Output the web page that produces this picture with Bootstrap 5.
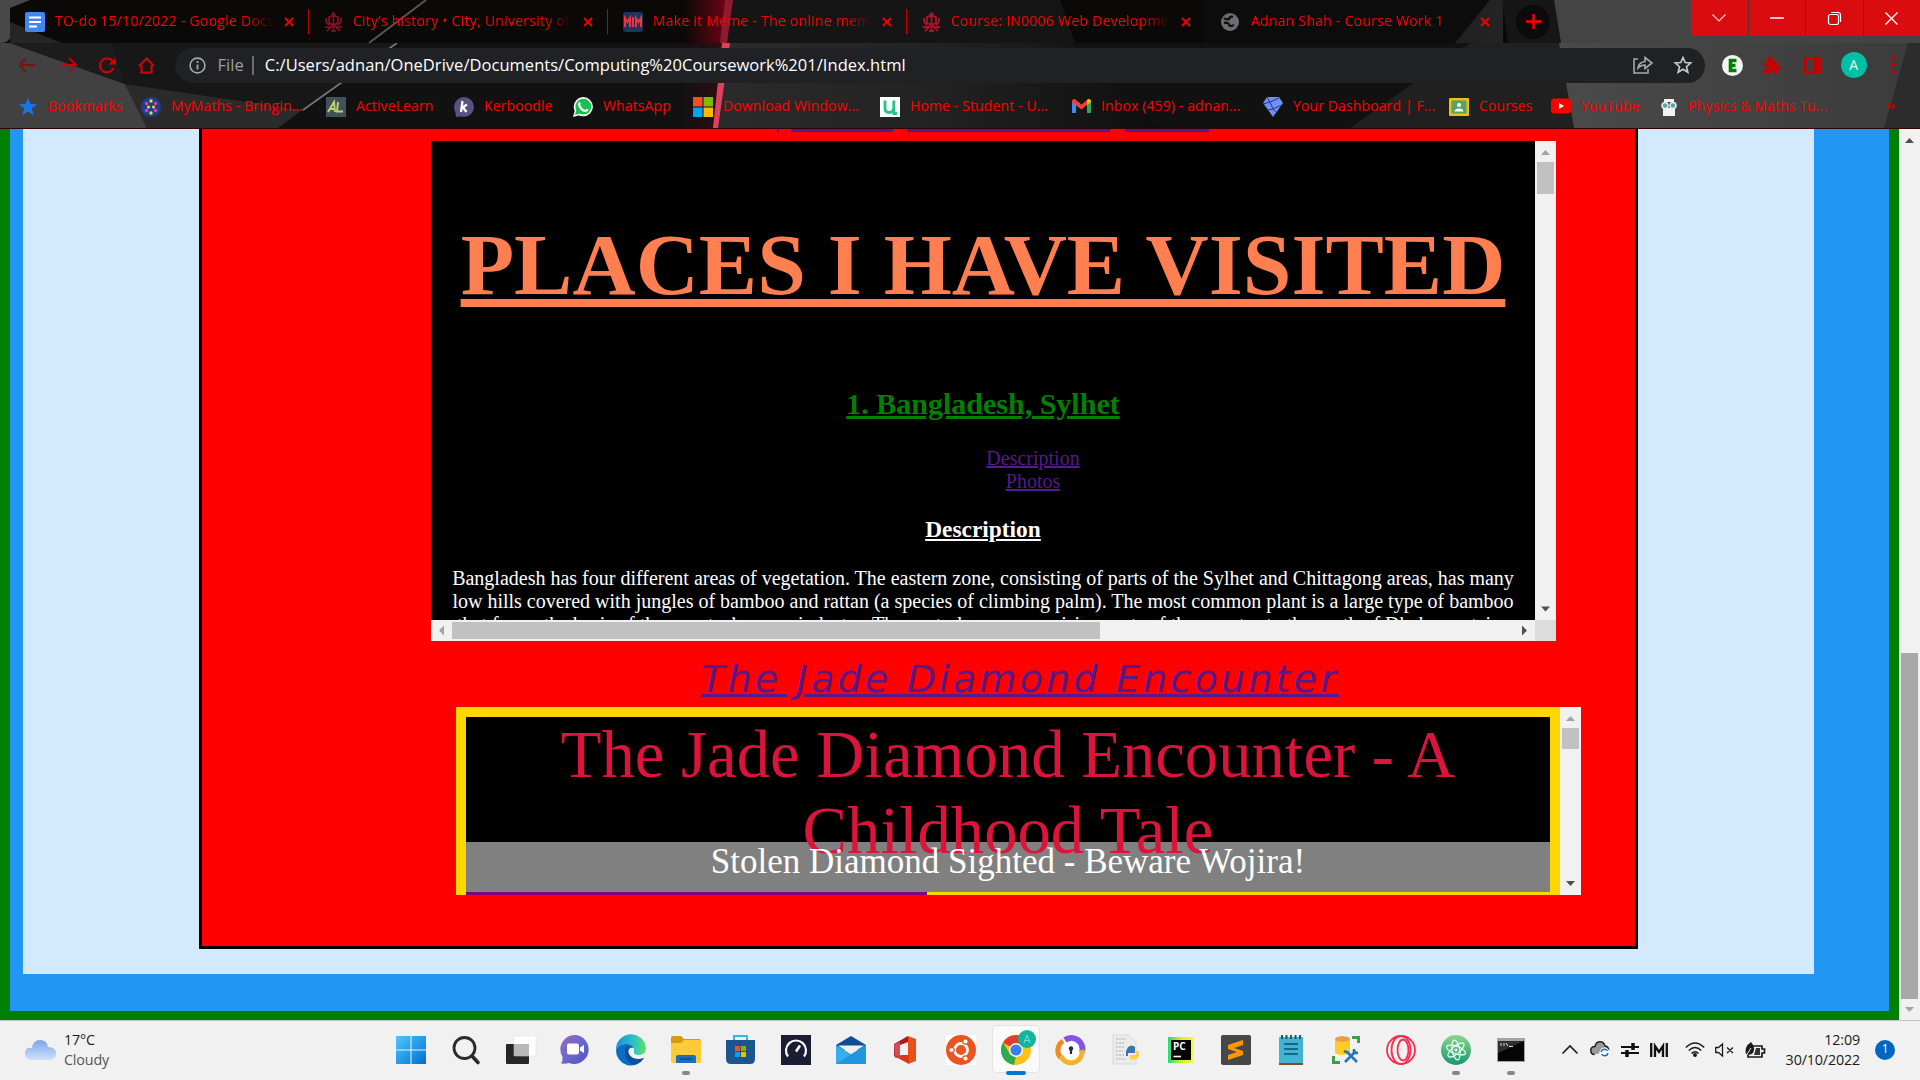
<!DOCTYPE html>
<html lang="en">
<head>
<meta charset="utf-8">
<meta name="viewport" content="width=device-width, initial-scale=1">
<title>Adnan Shah - Course Work 1</title>
<link href="https://cdn.jsdelivr.net/npm/bootstrap@5.3.0/dist/css/bootstrap.min.css" rel="stylesheet">
<style>
body{width:1920px;height:1080px;overflow:hidden;font-family:"Open Sans","Noto Sans",sans-serif;color:#000;line-height:1.2}
svg{display:block;flex:none;overflow:visible}
/* browser chrome */
.chrome{height:129px;border-bottom:1px solid #300;background:#0d0d0d;color:red;font-size:14px;flex:none}
.theme-art{position:absolute;left:0;top:0}
.tabs{height:43px;padding-left:10px}
.tab{width:299px;height:42px;padding-left:15px;padding-right:15px;letter-spacing:.25px}
.tab-name{width:219px;margin-left:10px;white-space:nowrap;overflow:hidden;-webkit-mask-image:linear-gradient(90deg,#000 88%,transparent 100%)}
.tab .tab-x{margin-left:auto}
.tab-sep{width:1px;height:25px;background:#c00000;margin-left:-1px}
.tab-new{width:34px;height:34px;border-radius:50%;background:#0c0a0a;margin-left:11px}
.win{width:229px;height:36px;gap:1px;background:#54302f}
.win>div{background:#db0c10;flex:1}
.toolbar{height:43px;padding-left:17px;padding-top:1px}
.tool{width:40.4px}
.omni{width:1530px;height:35px;border-radius:18px;background:#202124;margin-left:-4px;padding:0 13px 0 14px;font-size:16.5px;letter-spacing:.03px}
.omni .scheme{color:#9aa0a6;margin:0 6px 0 12px}
.omni .bar{width:2px;height:19px;background:#6a6d72;margin:0 11px 0 2px}
.url{color:#fff}
.ext{margin-left:17px;gap:20px}
.avatar{width:26px;height:26px;border-radius:50%;background:#00bfa5;color:#e6fffb;font-size:14px}
.marks{height:41px;letter-spacing:.12px}
.mk{white-space:nowrap;flex:none}
.mk span{margin-left:10px}
/* page */
.view{height:891px;background:#f1f1f1;flex:none}
.page{width:1899px;border:solid green;border-width:0 10px 9px;background:#2196f3;padding:0 75px 37px 13px}
.pale{background:#d3e9fd;padding:0 176px 25px;height:845px}
.redbox{background:red;border:3px solid #000;border-top:0;height:820px;font-family:"Liberation Serif",serif}
.cut-links{height:12px;padding-left:575px}
.cut-links i{height:3px;background:#551a8b}
.frame-a{width:1125px;height:500px;margin-left:229px;background:#000;color:#fff}
.pane-a{width:1104px;height:479px;overflow:hidden;padding-top:75px;text-align:center}
.pane-a h1{font-size:87.5px;line-height:98px;font-weight:700;color:coral;text-decoration:underline;margin:0;white-space:nowrap}
.pane-a h2{font-size:30px;line-height:34px;font-weight:700;color:green;text-decoration:underline;margin:73px 0 26px}
.pane-a ul{padding:0 0 0 100px;margin:0;font-size:20px;line-height:23px;list-style:none}
.visited{color:#551a8b;text-decoration:underline}
.pane-a h3{font-size:23.4px;line-height:27px;font-weight:700;text-decoration:underline;margin:23px 0 24px}
.pane-a p{font-size:20px;line-height:23px;margin:0;white-space:nowrap}
.sb-v{width:21px;background:#f1f1f1}
.sb-h{height:21px;background:#f1f1f1;width:1104px}
.arr{width:21px;height:21px;flex:none}
.thumb{background:#c1c1c1}
.sb-v .thumb{width:17px;margin:0 2px}
.sb-h .thumb{height:17px;width:648px}
.t1{height:32px}.t2{height:21px}
.t3{height:346px;margin-top:auto!important;background:#a8a8a8}
.tale-link{height:66px;padding-left:203px;font-family:"DejaVu Sans",sans-serif;font-style:italic;font-size:38px;line-height:76px;letter-spacing:3.2px;text-align:center;white-space:nowrap}
.frame-b{width:1125px;height:188px;margin-left:254px}
.pane-b{width:1104px;height:188px;background:gold;border:solid gold;border-width:10px 10px 0;text-align:center}
.tale-title{height:125px;background:#000;color:crimson;font-size:66.7px;line-height:76px}
.news{height:50px;background:gray;color:#fff;font-size:35px;line-height:40px}
.news-line{height:3px;width:461px;background:purple}
/* taskbar */
.taskbar{height:60px;background:#f1f1f1;border-top:1px solid #c4c4c4;color:#1b1b1b;font-size:14.3px;letter-spacing:-.15px;padding-bottom:2px;flex:none}
.weather{width:383px;padding-left:25px;line-height:20px;gap:8px}
.weather .sky{color:#555}
.app{width:55px;height:59px;flex:none;position:relative}
.app.run::after{content:"";position:absolute;bottom:4px;width:8px;height:4px;border-radius:2px;background:#868686}
.app.on::before{content:"";position:absolute;left:4px;top:5px;width:48px;height:48px;border-radius:5px;background:#fafafa;border:1px solid #e3e3e3}
.app.on svg{position:relative}
.app.on::after{content:"";position:absolute;bottom:4px;width:20px;height:4px;border-radius:2px;background:#0078d4}
.tray{margin-left:24px}
.clock{width:95px;line-height:20px;text-align:right}
.count{width:20px;height:20px;border-radius:50%;background:#0067c0;color:#fff;font-size:12px;margin-left:15px}
</style>
<script src="https://cdn.jsdelivr.net/npm/bootstrap@5.3.0/dist/js/bootstrap.bundle.min.js"></script>
</head>
<body class="d-flex flex-column m-0">

<header class="chrome position-relative">
  <svg class="theme-art" width="1920" height="128" viewBox="0 0 1920 128">
    <defs>
      <linearGradient id="g1"><stop offset="0" stop-color="#2b2b2b"/><stop offset=".5" stop-color="#222"/><stop offset="1" stop-color="#0e0e0e"/></linearGradient>
      <linearGradient id="g2"><stop offset="0" stop-color="#900018" stop-opacity="0"/><stop offset="1" stop-color="#a0001c" stop-opacity=".7"/></linearGradient>
      <linearGradient id="g3"><stop offset="0" stop-color="#4a4a4a"/><stop offset="1" stop-color="#3b3b3b"/></linearGradient>
      <linearGradient id="g4"><stop offset="0" stop-color="#0a0a0a"/><stop offset="1" stop-color="#242424"/></linearGradient>
    </defs>
    <rect width="1920" height="128" fill="#111"/>
    <path d="M0 43H10L125 84L147 128H0Z" fill="#414141"/>
    <path d="M10 43H112L125 84Z" fill="#1c1c1c"/>
    <path d="M112 43H398L302 110L125 84Z" fill="#171717"/>
    <path d="M125 84L302 110L278 128H147Z" fill="#2b2b2b"/>
    <path d="M397 43L303 110" stroke="#777" stroke-width="1.6"/>
    <rect x="680" y="43" width="44" height="85" fill="url(#g2)" opacity=".3"/>
    <path d="M728 43H1070L1160 128H716Z" fill="url(#g1)"/>
    <path d="M722 43H730L718 128H713Z" fill="#e0405c"/>
    <path d="M1470 43L1350 128H1580V43Z" fill="#202020"/>
    <path d="M1559 43H1920V128H1574Z" fill="url(#g3)"/>
    <path d="M1908 43L1884 128H1920V43Z" fill="#2c2c2c"/>
    <rect width="1920" height="43" fill="#0a0908"/>
    <path d="M0 0H30L10 8V38Q8 43 0 43Z" fill="#484848"/>
    <path d="M10 22L62 43H10Z" fill="#252525"/>
    <path d="M426 0L369 43" stroke="#555" stroke-width="2"/>
    <rect x="684" width="44" height="43" fill="url(#g2)"/>
    <path d="M732 0H1060L1075 43H727Z" fill="#151515"/>
    <path d="M725 0H733L727 43H720Z" fill="#8f1a30"/>
    <path d="M1200 0H1503V43H1205Z" fill="url(#g4)"/>
    <path d="M1205 0H1490L1455 43H1205Z" fill="#0c0c0c"/>
    <path d="M1502 0H1554L1561 43H1508Z" fill="#161616"/>
    <path d="M1554 0H1920V43H1561Z" fill="#444"/>
  </svg>
  <div class="position-relative">
    <nav class="tabs d-flex align-items-center">
      <div class="tab d-flex align-items-center">
        <svg width="20" height="20" viewBox="0 0 20 20"><rect width="20" height="20" rx="2" fill="#4285f4"/><path d="M4 5.500H16M4 10H16M4 14.500H12" stroke="#fff" stroke-width="2"/></svg>
        <span class="tab-name">TO-do 15/10/2022 - Google Docs</span>
        <svg class="tab-x" width="10" height="10" viewBox="0 0 10 10"><path d="M1 1L9 9M9 1L1 9" stroke="#f00000" stroke-width="2"/></svg>
      </div>
      <span class="tab-sep"></span>
      <div class="tab d-flex align-items-center">
        <svg width="19" height="20" viewBox="0 0 19 20" fill="none" stroke="#8f1020" stroke-width="1.6"><path d="M9.500 0V5M7 2.500H12M5 5Q9.500 3 14 5V11Q9.500 14 5 11ZM9.500 5V18M2 6V10L5 13M17 6V10L14 13M1 15H7L9.500 12L12 15H18M3 19L7 15M16 19L12 15M7 19H12"/></svg>
        <span class="tab-name">City’s history • City, University of</span>
        <svg class="tab-x" width="10" height="10" viewBox="0 0 10 10"><path d="M1 1L9 9M9 1L1 9" stroke="#f00000" stroke-width="2"/></svg>
      </div>
      <span class="tab-sep"></span>
      <div class="tab d-flex align-items-center">
        <svg width="20" height="20" viewBox="0 0 20 20"><rect width="20" height="20" rx="3" fill="#1c355e"/><path d="M2 15V6L4.500 10L7 6V15M10 5V15M13 15V6L15.500 10L18 6V15" fill="none" stroke="#f0323c" stroke-width="2"/></svg>
        <span class="tab-name">Make it Meme - The online meme</span>
        <svg class="tab-x" width="10" height="10" viewBox="0 0 10 10"><path d="M1 1L9 9M9 1L1 9" stroke="#f00000" stroke-width="2"/></svg>
      </div>
      <span class="tab-sep"></span>
      <div class="tab d-flex align-items-center">
        <svg width="19" height="20" viewBox="0 0 19 20" fill="none" stroke="#a81528" stroke-width="1.8"><path d="M9.500 0V5M7 2.500H12M5 5Q9.500 3 14 5V11Q9.500 14 5 11ZM9.500 5V18M2 6V10L5 13M17 6V10L14 13M1 15H7L9.500 12L12 15H18M3 19L7 15M16 19L12 15M7 19H12"/></svg>
        <span class="tab-name">Course: IN0006 Web Development</span>
        <svg class="tab-x" width="10" height="10" viewBox="0 0 10 10"><path d="M1 1L9 9M9 1L1 9" stroke="#f00000" stroke-width="2"/></svg>
      </div>
      <div class="tab d-flex align-items-center">
        <svg width="18" height="18" viewBox="0 0 18 18"><circle cx="9" cy="9" r="9" fill="#6a6e73"/><path d="M3 5Q5 7 8 6Q9 3 12 4M3 10Q8 9 8 12Q9 14 13 12" stroke="#111" stroke-width="2.400" fill="none"/></svg>
        <span class="tab-name ms-2 ps-1">Adnan Shah - Course Work 1</span>
        <svg class="tab-x" width="10" height="10" viewBox="0 0 10 10"><path d="M1 1L9 9M9 1L1 9" stroke="#f00000" stroke-width="2"/></svg>
      </div>
      <div class="tab-new d-flex align-items-center justify-content-center"><svg width="15" height="15" viewBox="0 0 15 15"><path d="M7.500 0V15M0 7.500H15" stroke="#f00" stroke-width="2.400"/></svg></div>
      <div class="win d-flex ms-auto align-self-start">
        <div class="d-flex align-items-center justify-content-center"><svg width="14" height="8" viewBox="0 0 14 8"><path d="M.5.5L7 7L13.500.5" fill="none" stroke="#ffd0d0" stroke-width="1.200"/></svg></div>
        <div class="d-flex align-items-center justify-content-center"><svg width="14" height="2"><path d="M0 1H14" stroke="#fff" stroke-width="1.500"/></svg></div>
        <div class="d-flex align-items-center justify-content-center"><svg width="13" height="13" viewBox="0 0 13 13" fill="none" stroke="#fff" stroke-width="1.200"><rect x=".5" y="2.500" width="10" height="10" rx="2"/><path d="M3 .5H10Q12.500.5 12.500 3V10"/></svg></div>
        <div class="d-flex align-items-center justify-content-center"><svg width="13" height="13" viewBox="0 0 13 13"><path d="M.5.5L12.500 12.500M12.500.5L.5 12.500" stroke="#fff" stroke-width="1.400"/></svg></div>
      </div>
    </nav>
    <div class="toolbar d-flex align-items-center">
      <div class="tool"><svg width="20" height="16" viewBox="0 0 20 16" fill="none" stroke="#7a1414" stroke-width="2"><path d="M18 8H3M9 1L2.500 8L9 15"/></svg></div>
      <div class="tool ps-1"><svg width="18" height="16" viewBox="0 0 18 16" fill="none" stroke="#c80000" stroke-width="2"><path d="M0 8H15M8 1L15 8L8 15"/></svg></div>
      <div class="tool"><svg width="18" height="17" viewBox="0 0 18 17" fill="none" stroke="#d40000" stroke-width="2.200"><path d="M14.500 4A7 7 0 1 0 15.500 11"/><path d="M17.500.5V7.500H10.500Z" fill="#d40000" stroke="none"/></svg></div>
      <div class="tool"><svg width="17" height="17" viewBox="0 0 17 17" fill="none" stroke="#d40000" stroke-width="2.200"><path d="M1 9L8.500 1.500L16 9M3.500 8V15.500H13.500V8"/></svg></div>
      <div class="omni d-flex align-items-center">
        <svg width="17" height="17" viewBox="0 0 17 17"><circle cx="8.500" cy="8.500" r="7.400" fill="none" stroke="#a5a8ac" stroke-width="1.600"/><path d="M8.500 7.500V12.500M8.500 4V6" stroke="#a5a8ac" stroke-width="1.800"/></svg>
        <span class="scheme">File</span><span class="bar"></span>
        <span class="url">C:/Users/adnan/OneDrive/Documents/Computing%20Coursework%201/Index.html</span>
        <svg class="ms-auto" width="20" height="18" viewBox="0 0 20 18" fill="none" stroke="#a5a8ac" stroke-width="1.600"><path d="M5 3H1V17H15V13M5 12Q6 6 12 5.500V1.500L19 7L12 12.500V9Q8 9 5 12Z"/></svg>
        <svg style="margin-left:21px" width="18" height="18" viewBox="0 0 18 18" fill="none" stroke="#c6c8ca" stroke-width="1.700"><path d="M9 1.500L11.200 6.500L16.700 7L12.500 10.700L13.800 16.200L9 13.300L4.200 16.200L5.500 10.700L1.300 7L6.800 6.500Z"/></svg>
      </div>
      <div class="ext d-flex align-items-center">
        <svg width="21" height="21" viewBox="0 0 21 21"><circle cx="10.500" cy="10.500" r="10.500" fill="#f4f4f4"/><path d="M14.500 5.500H8.500V15.500H14.500M8.500 10.500H13.500" fill="none" stroke="#008000" stroke-width="3.600"/></svg>
        <svg width="20" height="19" viewBox="0 0 20 19"><path d="M1 5H5.500Q4.500 0 7.500 0T9.500 5H14.500V9Q19 8.500 19 11T14.500 13V18.500H10.500Q10.500 14.500 8 14.500T5.500 18.500H1V13.500Q5 13 4.500 11T1 9Z" fill="#c60000"/></svg>
        <svg width="18" height="17" viewBox="0 0 18 17"><path d="M1 0H18V17H1ZM3.500 3V14.500H11V3Z" fill="#c60000" fill-rule="evenodd"/></svg>
        <div class="avatar d-flex align-items-center justify-content-center">A</div>
        <svg class="ms-1" width="4" height="18" viewBox="0 0 4 18" fill="#c60000"><circle cx="2" cy="2" r="2"/><circle cx="2" cy="9" r="2"/><circle cx="2" cy="16" r="2"/></svg>
      </div>
    </div>
    <div class="marks d-flex align-items-center">
      <div class="mk d-flex align-items-center" style="margin-left:18px;width:123px"><svg width="20" height="18" viewBox="0 0 20 18"><path d="M10 0L12.500 6H19L13.800 10.500L15.700 17.500L10 13.500L4.300 17.500L6.200 10.500L1 6H7.500Z" fill="#1a73e8"/></svg><span>Bookmarks</span></div>
      <div class="mk d-flex align-items-center" style="width:185px"><svg width="20" height="20" viewBox="0 0 20 20"><circle cx="10" cy="10" r="10" fill="#1d3f8f"/><g fill="#f0e020"><circle cx="10" cy="4" r="1.700"/><circle cx="10" cy="16" r="1.700"/><circle cx="7.500" cy="10" r="1.500"/><circle cx="12.500" cy="10" r="1.500"/></g><g fill="#e83ab8"><circle cx="5.500" cy="6.500" r="1.700"/><circle cx="14.500" cy="6.500" r="1.700"/><circle cx="5.500" cy="13.500" r="1.700"/><circle cx="14.500" cy="13.500" r="1.700"/></g></svg><span>MyMaths - Bringin...</span></div>
      <div class="mk d-flex align-items-center" style="width:128px"><svg width="20" height="20" viewBox="0 0 20 20"><rect width="20" height="20" fill="#42505a"/><path d="M2 15L8 5L9 15M4 12H9M12 5L11 14.500H17" fill="none" stroke="#b9d46a" stroke-width="2"/></svg><span>ActiveLearn</span></div>
      <div class="mk d-flex align-items-center" style="width:119px"><svg width="20" height="20" viewBox="0 0 20 20"><circle cx="10" cy="10" r="10" fill="#5b5080"/><path d="M1 12L2 20L9 19" fill="#5b5080"/><path d="M8.500 4L7 15M8 11L13 7.500M9 10.500L12.500 15" stroke="#fff" stroke-width="2.300"/></svg><span>Kerboodle</span></div>
      <div class="mk d-flex align-items-center" style="width:120px"><svg width="20" height="20" viewBox="0 0 20 20"><circle cx="10.300" cy="9.700" r="9.600" fill="#fff"/><path d="M0 20L2 13L7 18Z" fill="#fff"/><circle cx="10.300" cy="9.700" r="7.900" fill="#15c050"/><path d="M1.800 18L3.500 13L7 16.500Z" fill="#15c050"/><path d="M7 5.500Q5.500 7 7 10T12.500 14Q14 14 14.500 12" fill="none" stroke="#fff" stroke-width="2.300"/></svg><span>WhatsApp</span></div>
      <div class="mk d-flex align-items-center" style="width:187px"><svg width="20" height="20" viewBox="0 0 20 20"><path d="M0 0H9.500V9.500H0Z" fill="#f25022"/><path d="M10.500 0H20V9.500H10.500Z" fill="#7fba00"/><path d="M0 10.500H9.500V20H0Z" fill="#00a4ef"/><path d="M10.500 10.500H20V20H10.500Z" fill="#ffb900"/></svg><span>Download Window...</span></div>
      <div class="mk d-flex align-items-center" style="width:192px"><svg width="20" height="20" viewBox="0 0 20 20"><rect width="20" height="20" fill="#fff"/><path d="M5 3.500V11Q5 15.500 9 15.500T13.800 11V3.500M13.800 12V16.500H17" fill="none" stroke="#28c38a" stroke-width="2.800"/></svg><span>Home - Student - U...</span></div>
      <div class="mk d-flex align-items-center" style="width:191px"><svg width="19" height="14" viewBox="0 0 19 14"><path d="M0 2V14H4V5Z" fill="#4285f4"/><path d="M15 5V14H19V2Z" fill="#34a853"/><path d="M0 1.500Q2-1 4 1L9.500 5.500L15 1V6L9.500 10.500L0 3.500Z" fill="#ea4335"/><path d="M15 1Q17-1 19 1.500V3L15 6Z" fill="#fbbc04"/></svg><span>Inbox (459) - adnan...</span></div>
      <div class="mk d-flex align-items-center" style="width:186px"><svg width="20" height="20" viewBox="0 0 20 20"><path d="M4 0H16L20 6L10 20L0 6Z" fill="#6f8ff5"/><path d="M0 7L7 5L4 0M7 5L16 1M7 5L10 12L19 8M10 12L5 13M10 12L13 15" stroke="#2a3a80" stroke-width="1" fill="none"/></svg><span>Your Dashboard | F...</span></div>
      <div class="mk d-flex align-items-center" style="width:102px"><svg width="20" height="18" viewBox="0 0 20 18"><rect width="20" height="18" rx="1" fill="#f5ba14"/><rect x="2.500" y="2.500" width="15" height="13" fill="#57a464"/><circle cx="10" cy="7" r="2" fill="#fff"/><path d="M5.500 13.500Q6 10.500 10 10.500T14.500 13.500Z" fill="#fff"/></svg><span>Courses</span></div>
      <div class="mk d-flex align-items-center" style="width:109px"><svg width="20" height="16" viewBox="0 0 20 16"><rect width="20" height="15" y=".5" rx="3.500" fill="#f00"/><path d="M8 5L13 8L8 11Z" fill="#fff"/></svg><span>YouTube</span></div>
      <div class="mk d-flex align-items-center"><svg width="18" height="18" viewBox="0 0 18 18"><path d="M4 1H14V4H4ZM3 10H15V18H3Z" fill="#f2f2f2"/><circle cx="5" cy="7.500" r="3" fill="#4fa8a0" stroke="#eee" stroke-width="1.500"/><circle cx="13" cy="7.500" r="3" fill="#4fa8a0" stroke="#eee" stroke-width="1.500"/></svg><span>Physics &amp; Maths Tu...</span></div>
      <svg class="ms-auto" style="margin-right:25px" width="8" height="7" viewBox="0 0 8 7" fill="none" stroke="#d40000" stroke-width="1.500"><path d="M.5.5L3.500 3.500L.5 6.500M4.500.5L7.500 3.500L4.500 6.500"/></svg>
    </div>
  </div>
</header>

<main class="view d-flex">
  <div class="page">
    <div class="pale">
      <div class="redbox">
        <div class="cut-links d-flex"><i style="width:2px;margin-right:12px"></i><i style="width:102px;margin-right:14px"></i><i style="width:203px;margin-right:15px"></i><i style="width:84px"></i></div>

        <section class="frame-a d-flex">
          <div>
            <div class="pane-a">
              <h1>PLACES I HAVE VISITED</h1>
              <h2>1. Bangladesh, Sylhet</h2>
              <ul><li><a class="visited">Description</a></li><li><a class="visited">Photos</a></li></ul>
              <h3>Description</h3>
              <p>Bangladesh has four different areas of vegetation. The eastern zone, consisting of parts of the Sylhet and Chittagong areas, has many<br>low hills covered with jungles of bamboo and rattan (a species of climbing palm). The most common plant is a large type of bamboo<br>that forms the basis of the country’s paper industry. The central zone comprising parts of the country to the north of Dhaka contains</p>
            </div>
            <div class="sb-h d-flex align-items-center">
              <svg class="arr" viewBox="0 0 21 21"><path d="M13 5.500V15.500L8 10.500Z" fill="#a3a3a3"/></svg>
              <div class="thumb"></div>
              <svg class="arr ms-auto" viewBox="0 0 21 21"><path d="M8 5.500V15.500L13 10.500Z" fill="#505050"/></svg>
            </div>
          </div>
          <div class="d-flex flex-column">
            <div class="sb-v d-flex flex-column flex-fill">
              <svg class="arr" viewBox="0 0 21 21"><path d="M6 14H15L10.500 9Z" fill="#a3a3a3"/></svg>
              <div class="thumb t1"></div>
              <svg class="arr mt-auto" viewBox="0 0 21 21"><path d="M6 7.500H15L10.500 12.500Z" fill="#505050"/></svg>
            </div>
            <svg class="arr"><rect width="21" height="21" fill="#dcdcdc"/></svg>
          </div>
        </section>

        <div class="tale-link"><a class="visited">The Jade Diamond Encounter</a></div>

        <section class="frame-b d-flex">
          <div class="pane-b">
            <div class="tale-title">The Jade Diamond Encounter - A<br>Childhood Tale</div>
            <div class="news">Stolen Diamond Sighted - Beware Wojira!</div>
            <div class="news-line"></div>
          </div>
          <div class="sb-v d-flex flex-column">
            <svg class="arr" viewBox="0 0 21 21"><path d="M6 14H15L10.500 9Z" fill="#a3a3a3"/></svg>
            <div class="thumb t2"></div>
            <svg class="arr mt-auto" viewBox="0 0 21 21"><path d="M6 7H15L10.500 12Z" fill="#505050"/></svg>
          </div>
        </section>
      </div>
    </div>
  </div>
  <div class="sb-v d-flex flex-column">
    <svg class="arr" viewBox="0 0 21 21"><path d="M6 14H15L10.500 9Z" fill="#505050"/></svg>
    <div class="thumb t3"></div>
    <svg class="arr" viewBox="0 0 21 21"><path d="M6 8H15L10.500 13Z" fill="#a3a3a3"/></svg>
  </div>
</main>

<footer class="taskbar d-flex align-items-center">
  <div class="weather d-flex align-items-center">
    <svg width="31" height="20" viewBox="0 0 31 20"><defs><linearGradient id="cl" x2="0" y2="1"><stop offset="0" stop-color="#7ea4ea"/><stop offset="1" stop-color="#cfe0fa"/></linearGradient></defs><path d="M7 20Q0 20 0 13.500T7 8Q8 0 15 0T23 7Q31 7 31 13.500T24 20Z" fill="url(#cl)"/></svg>
    <div>17°C<br><span class="sky">Cloudy</span></div>
  </div>
  <div class="app d-flex align-items-center justify-content-center"><svg width="30" height="30" viewBox="0 0 30 30"><defs><linearGradient id="wn" x2="1" y2="1"><stop offset="0" stop-color="#4cc8ff"/><stop offset="1" stop-color="#006fd0"/></linearGradient></defs><path d="M0 1H14.500V14.500H0ZM15.500 1H30V14.500H15.500ZM0 15.500H14.500V29H0ZM15.500 15.500H30V29H15.500Z" fill="url(#wn)"/></svg></div>
  <div class="app d-flex align-items-center justify-content-center"><svg width="28" height="28" viewBox="0 0 28 28" fill="none" stroke="#2b2b2b"><circle cx="12.500" cy="12" r="10.500" stroke-width="2.800"/><path d="M20 20L26 26.500" stroke-width="3.600" stroke-linecap="round"/></svg></div>
  <div class="app d-flex align-items-center justify-content-center"><svg width="30" height="28" viewBox="0 0 30 28"><rect y="8" width="23" height="20" rx="1" fill="#262626"/><rect x="8" width="22" height="20" rx="1" fill="#fff" stroke="#ddd" stroke-width=".5"/><path d="M8 8H23V20H8Z" fill="#b8b8b8"/></svg></div>
  <div class="app d-flex align-items-center justify-content-center"><svg width="29" height="29" viewBox="0 0 29 29"><defs><linearGradient id="ch" x2="1" y2="1"><stop offset="0" stop-color="#9a6ab4"/><stop offset=".5" stop-color="#6a68d0"/><stop offset="1" stop-color="#5054c0"/></linearGradient></defs><path d="M14.500 0A14.500 14.500 0 1 1 8 28Q4 29 0 28.500Q2 26 1.500 22A14.500 14.500 0 0 1 14.500 0Z" fill="url(#ch)"/><rect x="6" y="8.500" width="12" height="11" rx="2" fill="#fff"/><path d="M19 12.500L23 10V18L19 15.500Z" fill="#fff"/></svg></div>
  <div class="app d-flex align-items-center justify-content-center"><svg width="30" height="30" viewBox="0 0 30 30"><defs><linearGradient id="ed"><stop offset="0" stop-color="#1690d8"/><stop offset=".6" stop-color="#2bc5c0"/><stop offset="1" stop-color="#66e060"/></linearGradient></defs><path d="M0 15A15 15 0 0 1 30 13.500Q30 20 23 20Q17 20 18 16Q19 11 12 9Q3 8 0 15Z" fill="url(#ed)"/><path d="M0 15Q3 8 12 9Q17 10 17.500 13Q13 12 12 17Q12 24 20 25Q25 25 28 23A15 15 0 0 1 0 15Z" fill="#0c6cc0"/><path d="M9 17Q9 11 14 11.500Q11 15 13 19Q17 26 28 23Q23 30 16 29.500Q9 26 9 17Z" fill="#0d4f9c"/></svg></div>
  <div class="app run d-flex align-items-center justify-content-center"><svg width="30" height="27" viewBox="0 0 30 27"><path d="M0 2Q0 0 2 0H10L13 3H28Q30 3 30 5V10H0Z" fill="#d99a10"/><path d="M0 7H10L13 4H28Q30 4 30 6V25Q30 27 28 27H2Q0 27 0 25Z" fill="#ffc93c"/><path d="M5 27V21Q5 19 7 19H23Q25 19 25 21V27Z" fill="#1470c0"/><path d="M9 23H21" stroke="#0a4b8c" stroke-width="1.500"/></svg></div>
  <div class="app d-flex align-items-center justify-content-center"><svg width="29" height="29" viewBox="0 0 29 29"><path d="M8 5V1H21V5" fill="none" stroke="#35b5f0" stroke-width="2"/><path d="M0 5H29V24Q29 29 24 29H5Q0 29 0 24Z" fill="#1b5590"/><path d="M9 11H14V16H9Z" fill="#f25022"/><path d="M15 11H20V16H15Z" fill="#7fba00"/><path d="M9 17H14V22H9Z" fill="#00a4ef"/><path d="M15 17H20V22H15Z" fill="#ffb900"/></svg></div>
  <div class="app d-flex align-items-center justify-content-center"><svg width="30" height="30" viewBox="0 0 30 30"><rect width="30" height="30" fill="#1b1d33"/><path d="M7 21.500A10 10 0 1 1 23 21.500" fill="none" stroke="#fff" stroke-width="2.200"/><path d="M19 10.500L15 16.500" stroke="#fff" stroke-width="2.600"/></svg></div>
  <div class="app d-flex align-items-center justify-content-center"><svg width="30" height="28" viewBox="0 0 30 28"><path d="M0 9L15 0L30 9V14H0Z" fill="#0c4f96"/><path d="M0 9L15 18L30 9V28H0Z" fill="#35aeea"/><path d="M0 28L30 9V28Z" fill="#2196e0"/><path d="M2 9.500H28L15 18Z" fill="#f0f0f0"/></svg></div>
  <div class="app d-flex align-items-center justify-content-center"><svg width="23" height="28" viewBox="0 0 23 28"><path d="M14 0L22 3V25L14 28Z" fill="#e8501a"/><path d="M0 8L14 0V6L6 9V19L2 22L0 20Z" fill="#b01818"/><path d="M2 21L7 19H15V28Z" fill="#d8381c"/><path d="M0 8L6 6V19L1 21Z" fill="#d44a60"/></svg></div>
  <div class="app d-flex align-items-center justify-content-center"><svg width="30" height="30" viewBox="0 0 30 30"><rect width="30" height="30" fill="#fff"/><circle cx="15" cy="15" r="15" fill="#e95420"/><circle cx="15" cy="15" r="6.500" fill="none" stroke="#fff" stroke-width="2.800"/><g fill="#fff" stroke="#e95420" stroke-width="1.200"><circle cx="5.500" cy="15" r="2.700"/><circle cx="19.500" cy="6.500" r="2.700"/><circle cx="19.500" cy="23.500" r="2.700"/></g></svg></div>
  <div class="app on d-flex align-items-center justify-content-center"><svg width="30" height="30" viewBox="0 0 30 30"><circle cx="15" cy="15" r="15" fill="#fbc116"/><path d="M15 15L2 7.500A15 15 0 0 1 28 7.500H15Z" fill="#e33b2e"/><path d="M2 7.500L9.500 20L15 21L13 30A15 15 0 0 1 2 7.500Z" fill="#2da94f"/><path d="M15 8.500H28.500" stroke="#e33b2e" stroke-width="3"/><circle cx="15" cy="15" r="7" fill="#fff"/><circle cx="15" cy="15" r="5.600" fill="#3b7ded"/><circle cx="26" cy="4" r="9" fill="#12b5a0"/><path d="M23 8L26 0L29 8M24 5.500H28" fill="none" stroke="#7fe0d4" stroke-width="1"/></svg></div>
  <div class="app d-flex align-items-center justify-content-center"><svg width="28" height="28" viewBox="0 0 28 28" fill="none"><circle cx="14" cy="14" r="10" fill="#fff"/><path d="M4 22A11 11 0 0 1 6 5" stroke="#f08a20" stroke-width="5"/><path d="M8 4A11 11 0 0 1 25 16" stroke="#8354e0" stroke-width="6"/><path d="M25 14A11 11 0 0 1 4 20" stroke="#f0b428" stroke-width="5"/><circle cx="14" cy="12.500" r="2.200" fill="#1e2a50"/><path d="M14 12V18" stroke="#1e2a50" stroke-width="2.200"/></svg></div>
  <div class="app d-flex align-items-center justify-content-center"><svg width="28" height="29" viewBox="0 0 28 29"><path d="M1 0H17L24 7V29H1Z" fill="#ececec" stroke="#ccc" stroke-width=".6"/><path d="M4 4H14M4 8H12M4 12H13M4 16H11M4 20H12M4 24H14" stroke="#aaa" stroke-dasharray="2 1"/><path d="M16 12Q20 9 23 12V18H16V21H14V16Z" fill="#3a76a8"/><path d="M27 16V22Q24 26 18 24V20H24V16Z" fill="#ffd242"/></svg></div>
  <div class="app d-flex align-items-center justify-content-center"><svg width="26" height="26" viewBox="0 0 26 26"><defs><linearGradient id="py"><stop offset="0" stop-color="#21d789"/><stop offset=".5" stop-color="#d6f022"/><stop offset="1" stop-color="#fcf84a"/></linearGradient></defs><rect width="26" height="26" fill="url(#py)"/><rect x="3" y="3" width="20" height="20"/><text x="5" y="13" font-size="10" font-weight="700" fill="#fff" letter-spacing="0">PC</text><path d="M5.500 19.500H13" stroke="#fff" stroke-width="1.600"/></svg></div>
  <div class="app d-flex align-items-center justify-content-center"><svg width="30" height="30" viewBox="0 0 30 30"><rect width="30" height="30" rx="2" fill="#474747"/><path d="M7 10L22 5V10L13 13L22 16V20L7 25V20L16 17L7 14Z" fill="#ff9800"/></svg></div>
  <div class="app d-flex align-items-center justify-content-center"><svg width="24" height="30" viewBox="0 0 24 30"><rect y="2" width="24" height="27" rx="1" fill="#42b4d2"/><path d="M0 29H24" stroke="#8a4b20" stroke-width="2"/><path d="M3 0V4M7.500 0V4M12 0V4M16.500 0V4M21 0V4" stroke="#155b78" stroke-width="2"/><path d="M5 9H19M5 14H19M5 19H19" stroke="#14688a" stroke-width="2"/></svg></div>
  <div class="app d-flex align-items-center justify-content-center"><svg width="28" height="28" viewBox="0 0 28 28"><path d="M3 3Q10-2 18 3V17Q10 21 3 17Z" fill="#ffcc22"/><ellipse cx="10.500" cy="3" rx="7.500" ry="2.800" fill="#eb9a50"/><path d="M20 1.500H26.500V7M1.500 20V26.500H8" fill="none" stroke="#3f9e48" stroke-width="3"/><path d="M15 16L25 26M24 15L13 26M12 15L17 17M22 13V17H26" fill="none" stroke="#2176bd" stroke-width="2.600"/></svg></div>
  <div class="app d-flex align-items-center justify-content-center"><svg width="30" height="30" viewBox="0 0 30 30" fill="none" stroke="#fa2d50" stroke-width="1.800"><circle cx="15" cy="15" r="14"/><ellipse cx="15" cy="15" rx="9.500" ry="14"/><ellipse cx="17" cy="15" rx="5.500" ry="10.500"/></svg></div>
  <div class="app run d-flex align-items-center justify-content-center"><svg width="30" height="30" viewBox="0 0 30 30"><defs><linearGradient id="at" x2="0" y2="1"><stop offset="0" stop-color="#8fd48a"/><stop offset="1" stop-color="#129a72"/></linearGradient></defs><circle cx="15" cy="15" r="15" fill="url(#at)"/><g fill="none" stroke="#eafff2" stroke-width="1.200"><ellipse cx="15" cy="15" rx="10" ry="3.800" transform="rotate(20 15 15)"/><ellipse cx="15" cy="15" rx="10" ry="3.800" transform="rotate(80 15 15)"/><ellipse cx="15" cy="15" rx="10" ry="3.800" transform="rotate(140 15 15)"/></g><circle cx="15" cy="15" r="1.500" fill="#fff"/></svg></div>
  <div class="app run d-flex align-items-center justify-content-center"><svg width="28" height="24" viewBox="0 0 28 24"><rect width="28" height="24" fill="#a0a4a8"/><rect x="1" y="3" width="26" height="20" fill="#050505"/><path d="M1 15L27 3H1Z" fill="#303030"/><path d="M4 5V8M7 5V8M9 5L11 8M12 8.500H16" stroke="#ddd"/></svg></div>
  <div class="tray d-flex align-items-center">
    <svg width="16" height="9" viewBox="0 0 16 9"><path d="M.5 8.500L8 1L15.500 8.500" fill="none" stroke="#1b1b1b" stroke-width="1.600"/></svg>
    <svg style="margin-left:12px" width="20" height="17" viewBox="0 0 20 17"><path d="M4.500 13.500Q.8 13.500.8 9.500T5 5.500Q6 .8 10 .8T15 5Q19 5.500 18.500 10" fill="#9a9a9a" stroke="#222" stroke-width="1.500"/><circle cx="14.500" cy="11.500" r="5" fill="#fff"/><path d="M11 11A3.500 3.500 0 0 1 17.500 10M18 12A3.500 3.500 0 0 1 11.500 13" fill="none" stroke="#1470c8" stroke-width="1.500"/></svg>
    <svg style="margin-left:11px" width="18" height="14" viewBox="0 0 18 14"><path d="M0 4H18M0 10H18" stroke="#111" stroke-width="2.200"/><path d="M12 0V7M6 7V14" stroke="#111" stroke-width="3.500"/></svg>
    <svg style="margin-left:11px" width="18" height="14" viewBox="0 0 18 14"><path d="M1.200 0V14M16.800 0V14M5 14V3L9 9L13 3V14" fill="none" stroke="#111" stroke-width="2.300"/></svg>
    <svg style="margin-left:17px" width="20" height="15" viewBox="0 0 20 15" fill="none" stroke="#1b1b1b" stroke-width="1.500"><path d="M.8 5.500Q10-3.500 19.200 5.500M3.800 8.500Q10 2.500 16.200 8.500M6.500 11.500Q10 8 13.500 11.500"/><circle cx="10" cy="13" r="1.200" fill="#1b1b1b"/></svg>
    <svg style="margin-left:10px" width="19" height="14" viewBox="0 0 19 14" fill="none" stroke="#1b1b1b" stroke-width="1.300"><path d="M.7 4.500H3.500L7.500 1V13L3.500 9.500H.7ZM12 4.500L18 10M18 4.500L12 10"/></svg>
    <svg style="margin-left:11px" width="20" height="16" viewBox="0 0 20 16"><path d="M3 4H17V7H19.500V11H17V15H3Z" fill="none" stroke="#1b1b1b" stroke-width="1.700"/><path d="M1 12Q-1 5 6 0Q11 6 8 11Q5 14 1 12Z" fill="#1b1b1b"/><path d="M11 6H15V13H9Z" fill="#333"/><path d="M1 14L6 6" stroke="#eee"/></svg>
  </div>
  <div class="clock">12:09<br>30/10/2022</div>
  <div class="count d-flex align-items-center justify-content-center">1</div>
</footer>
</body>
</html>
